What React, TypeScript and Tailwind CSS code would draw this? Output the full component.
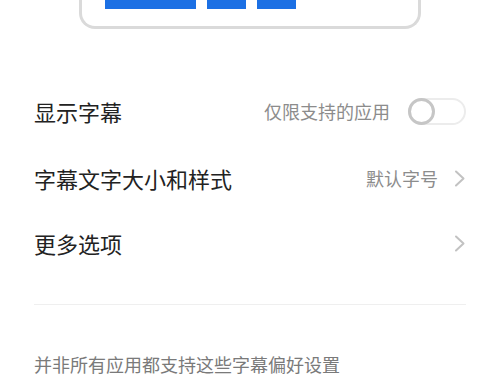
import React from 'react';

const ChevronRight = () => (
  <svg width="12" height="17" viewBox="0 0 12 17" fill="none" className="shrink-0">
    <path d="M2 1.5 L9.5 8.5 L2 15.5" stroke="#c2c2c2" strokeWidth="2" strokeLinecap="round" strokeLinejoin="round" />
  </svg>
);

const Toggle = () => (
  <div className="relative h-[27px] w-[58px] shrink-0 rounded-full border-2 border-[#ececec] bg-white">
    <div className="absolute left-[-2px] top-[-2px] h-[27px] w-[27px] rounded-full border-[3px] border-[#c6c6c6] bg-white" />
  </div>
);

export default function App() {
  return (
    <div
      className="h-[380px] w-[500px] overflow-hidden bg-white"
      style={{ fontFamily: '"Noto Sans CJK SC", "Noto Sans", sans-serif' }}
    >
      {/* preview card, top cut off */}
      <div className="mx-[79px] h-[29px] rounded-b-[16px] border-[3px] border-t-0 border-[#dadada]">
        <div className="flex gap-[11px] pl-[23px]">
          <div className="h-[9px] w-[91px] bg-[#1c70e4]" />
          <div className="h-[9px] w-[39px] bg-[#1c70e4]" />
          <div className="h-[9px] w-[39px] bg-[#1c70e4]" />
        </div>
      </div>

      <div className="mt-[49px] px-[34px]">
        <div className="flex h-[66px] items-center justify-between">
          <span className="text-[22px] leading-none text-[#222]">显示字幕</span>
          <div className="flex items-center gap-[18px]">
            <span className="text-[18px] leading-none text-[#8c8c8c]">仅限支持的应用</span>
            <Toggle />
          </div>
        </div>

        <div className="flex h-[68px] items-center justify-between">
          <span className="text-[22px] leading-none text-[#222]">字幕文字大小和样式</span>
          <div className="flex items-center gap-[16px]">
            <span className="text-[18px] leading-none text-[#8c8c8c]">默认字号</span>
            <ChevronRight />
          </div>
        </div>

        <div className="flex h-[62px] items-center justify-between">
          <span className="text-[22px] leading-none text-[#222]">更多选项</span>
          <ChevronRight />
        </div>

        <div className="mt-[30px] h-px bg-[#efefef]" />

        <div className="mt-[50px] text-[18px] leading-none text-[#7a7a7a]">并非所有应用都支持这些字幕偏好设置</div>
      </div>
    </div>
  );
}
